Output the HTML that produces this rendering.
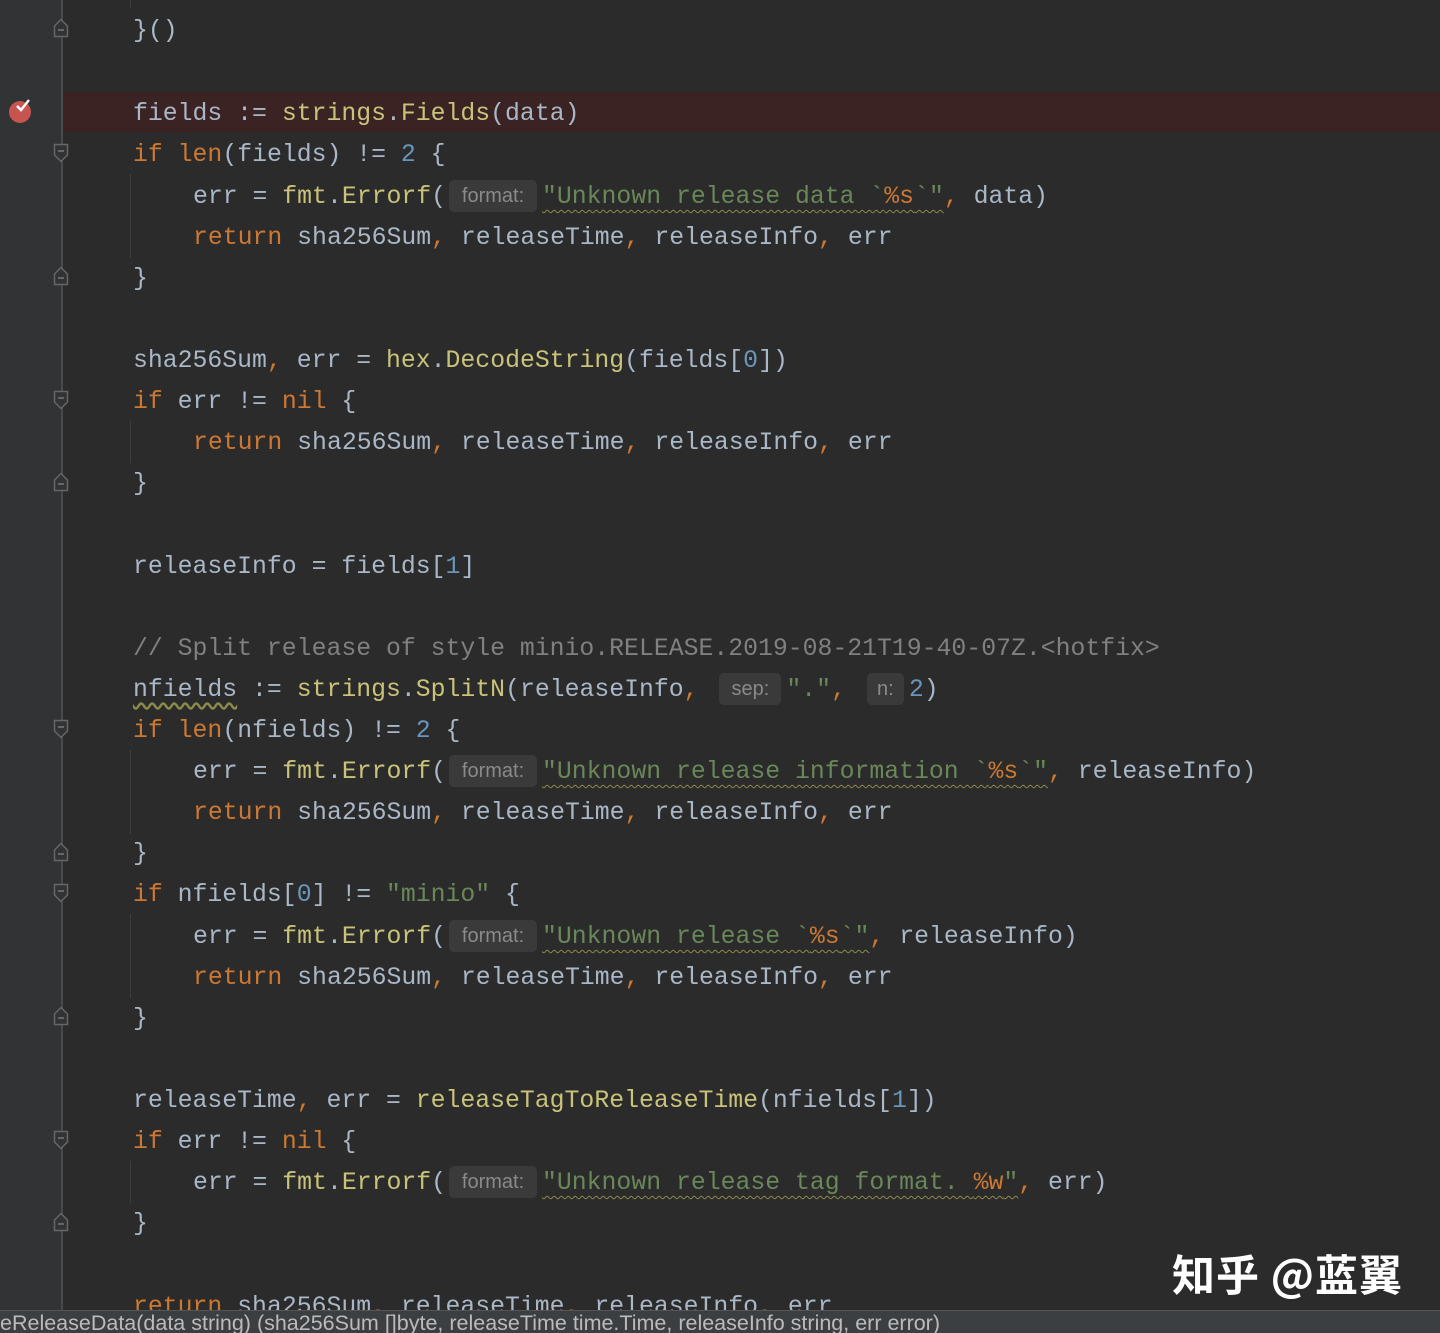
<!DOCTYPE html>
<html><head><meta charset="utf-8"><style>
html,body{margin:0;padding:0;}
body{width:1440px;height:1332px;background:#2b2b2b;position:relative;overflow:hidden;font-family:"Liberation Mono",monospace;font-size:24.8px;color:#a9b7c6;}
.gut{position:absolute;left:0;top:0;width:62px;height:1310px;background:#313335;}
.gl{position:absolute;left:61px;top:0;width:2px;height:1310px;background:#4a4a4a;}
.bp{position:absolute;left:62px;top:92px;width:1378px;height:40px;background:#3b2324;}
.l{position:absolute;height:41px;line-height:41px;white-space:pre;margin-top:3px;}
.k{color:#cc7832}.f{color:#c9c37a}.n{color:#6897bb}.s{color:#6a8759}.c{color:#808080}.p{color:#cc7832}
.w{text-decoration:underline wavy #8a8a4a;text-decoration-thickness:1px;text-underline-offset:6px;}
.h{display:inline-block;height:32px;line-height:32px;background:#3a3a3a;color:#8a8a8a;font-family:"Liberation Sans",sans-serif;font-size:20px;text-align:center;border-radius:5px;vertical-align:1px;margin:0 5px 0 3px;}
.ig{position:absolute;left:130px;width:1px;background:#3e3e3e;}
.fo{position:absolute;left:53px;width:16px;height:20px;}
.st{position:absolute;left:0;top:1310px;width:1440px;height:22px;background:#3c3f41;border-top:1px solid #555;color:#bbb;font-family:"Liberation Sans",sans-serif;font-size:21.5px;line-height:25px;white-space:pre;overflow:hidden;}
.wm{position:absolute;left:1172px;top:1242px;color:#fff;font-family:"Noto Sans CJK SC",sans-serif;font-size:43px;font-weight:bold;letter-spacing:1px;white-space:pre;}
</style></head><body>
<div class="gut"></div>
<div class="bp"></div>
<div class="gl"></div>
<svg style="position:absolute;left:6px;top:96px" width="32" height="32"><circle cx="14" cy="16" r="11" fill="#c75450"/><path d="M11 10 l4 4 l8 -10" stroke="#fff" stroke-width="2.5" fill="none"/></svg>

<svg class="fo" style="top:18px"><path d="M1.5 18.5 V8 L8 1.5 L14.5 8 V18.5 Z" fill="#313335" stroke="#666" stroke-width="1.5"/><path d="M5 12 H11" stroke="#777" stroke-width="1.5"/></svg>
<svg class="fo" style="top:143px"><path d="M1.5 1.5 H14.5 V12 L8 18.5 L1.5 12 Z" fill="#313335" stroke="#666" stroke-width="1.5"/><path d="M5 8 H11" stroke="#777" stroke-width="1.5"/></svg>
<svg class="fo" style="top:266px"><path d="M1.5 18.5 V8 L8 1.5 L14.5 8 V18.5 Z" fill="#313335" stroke="#666" stroke-width="1.5"/><path d="M5 12 H11" stroke="#777" stroke-width="1.5"/></svg>
<svg class="fo" style="top:390px"><path d="M1.5 1.5 H14.5 V12 L8 18.5 L1.5 12 Z" fill="#313335" stroke="#666" stroke-width="1.5"/><path d="M5 8 H11" stroke="#777" stroke-width="1.5"/></svg>
<svg class="fo" style="top:472px"><path d="M1.5 18.5 V8 L8 1.5 L14.5 8 V18.5 Z" fill="#313335" stroke="#666" stroke-width="1.5"/><path d="M5 12 H11" stroke="#777" stroke-width="1.5"/></svg>
<svg class="fo" style="top:719px"><path d="M1.5 1.5 H14.5 V12 L8 18.5 L1.5 12 Z" fill="#313335" stroke="#666" stroke-width="1.5"/><path d="M5 8 H11" stroke="#777" stroke-width="1.5"/></svg>
<svg class="fo" style="top:842px"><path d="M1.5 18.5 V8 L8 1.5 L14.5 8 V18.5 Z" fill="#313335" stroke="#666" stroke-width="1.5"/><path d="M5 12 H11" stroke="#777" stroke-width="1.5"/></svg>
<svg class="fo" style="top:883px"><path d="M1.5 1.5 H14.5 V12 L8 18.5 L1.5 12 Z" fill="#313335" stroke="#666" stroke-width="1.5"/><path d="M5 8 H11" stroke="#777" stroke-width="1.5"/></svg>
<svg class="fo" style="top:1006px"><path d="M1.5 18.5 V8 L8 1.5 L14.5 8 V18.5 Z" fill="#313335" stroke="#666" stroke-width="1.5"/><path d="M5 12 H11" stroke="#777" stroke-width="1.5"/></svg>
<svg class="fo" style="top:1130px"><path d="M1.5 1.5 H14.5 V12 L8 18.5 L1.5 12 Z" fill="#313335" stroke="#666" stroke-width="1.5"/><path d="M5 8 H11" stroke="#777" stroke-width="1.5"/></svg>
<svg class="fo" style="top:1212px"><path d="M1.5 18.5 V8 L8 1.5 L14.5 8 V18.5 Z" fill="#313335" stroke="#666" stroke-width="1.5"/><path d="M5 12 H11" stroke="#777" stroke-width="1.5"/></svg>

<div class="ig" style="top:0;height:8px"></div>
<div class="ig" style="top:174px;height:84px"></div>
<div class="ig" style="top:421px;height:42px"></div>
<div class="ig" style="top:750px;height:84px"></div>
<div class="ig" style="top:914px;height:84px"></div>
<div class="ig" style="top:1161px;height:42px"></div>

<div class="l" style="left:133px;top:8px">}()</div>
<div class="l" style="left:133px;top:91px">fields := <span class="f">strings</span>.<span class="f">Fields</span>(data)</div>
<div class="l" style="left:133px;top:132px"><span class="k">if</span> <span class="k">len</span>(fields) != <span class="n">2</span> {</div>
<div class="l" style="left:193px;top:174px">err = <span class="f">fmt</span>.<span class="f">Errorf</span>(<span class="h" style="width:88px">format:</span><span class="s w">"Unknown release data `<span class="p">%s</span>`"</span><span class="k">,</span> data)</div>
<div class="l" style="left:193px;top:215px"><span class="k">return</span> sha256Sum<span class="k">,</span> releaseTime<span class="k">,</span> releaseInfo<span class="k">,</span> err</div>
<div class="l" style="left:133px;top:256px">}</div>
<div class="l" style="left:133px;top:338px">sha256Sum<span class="k">,</span> err = <span class="f">hex</span>.<span class="f">DecodeString</span>(fields[<span class="n">0</span>])</div>
<div class="l" style="left:133px;top:379px"><span class="k">if</span> err != <span class="k">nil</span> {</div>
<div class="l" style="left:193px;top:420px"><span class="k">return</span> sha256Sum<span class="k">,</span> releaseTime<span class="k">,</span> releaseInfo<span class="k">,</span> err</div>
<div class="l" style="left:133px;top:461px">}</div>
<div class="l" style="left:133px;top:544px">releaseInfo = fields[<span class="n">1</span>]</div>
<div class="l c" style="left:133px;top:626px">// Split release of style minio.RELEASE.2019-08-21T19-40-07Z.&lt;hotfix&gt;</div>
<div class="l" style="left:133px;top:667px"><span style="text-decoration:underline wavy #8a8a4a;text-underline-offset:6px">nfields</span> := <span class="f">strings</span>.<span class="f">SplitN</span>(releaseInfo<span class="k">,</span> <span class="h" style="width:62px;margin-left:6px">sep:</span><span class="s">"."</span><span class="k">,</span> <span class="h" style="width:37px;margin-left:6px">n:</span><span class="n">2</span>)</div>
<div class="l" style="left:133px;top:708px"><span class="k">if</span> <span class="k">len</span>(nfields) != <span class="n">2</span> {</div>
<div class="l" style="left:193px;top:749px">err = <span class="f">fmt</span>.<span class="f">Errorf</span>(<span class="h" style="width:88px">format:</span><span class="s w">"Unknown release information `<span class="p">%s</span>`"</span><span class="k">,</span> releaseInfo)</div>
<div class="l" style="left:193px;top:790px"><span class="k">return</span> sha256Sum<span class="k">,</span> releaseTime<span class="k">,</span> releaseInfo<span class="k">,</span> err</div>
<div class="l" style="left:133px;top:831px">}</div>
<div class="l" style="left:133px;top:872px"><span class="k">if</span> nfields[<span class="n">0</span>] != <span class="s">"minio"</span> {</div>
<div class="l" style="left:193px;top:914px">err = <span class="f">fmt</span>.<span class="f">Errorf</span>(<span class="h" style="width:88px">format:</span><span class="s w">"Unknown release `<span class="p">%s</span>`"</span><span class="k">,</span> releaseInfo)</div>
<div class="l" style="left:193px;top:955px"><span class="k">return</span> sha256Sum<span class="k">,</span> releaseTime<span class="k">,</span> releaseInfo<span class="k">,</span> err</div>
<div class="l" style="left:133px;top:996px">}</div>
<div class="l" style="left:133px;top:1078px">releaseTime<span class="k">,</span> err = <span class="f">releaseTagToReleaseTime</span>(nfields[<span class="n">1</span>])</div>
<div class="l" style="left:133px;top:1119px"><span class="k">if</span> err != <span class="k">nil</span> {</div>
<div class="l" style="left:193px;top:1160px">err = <span class="f">fmt</span>.<span class="f">Errorf</span>(<span class="h" style="width:88px">format:</span><span class="s w">"Unknown release tag format. <span class="p">%w</span>"</span><span class="k">,</span> err)</div>
<div class="l" style="left:133px;top:1201px">}</div>
<div class="l" style="left:133px;top:1284px"><span class="k">return</span> sha256Sum<span class="k">,</span> releaseTime<span class="k">,</span> releaseInfo<span class="k">,</span> err</div>

<div class="wm">知乎 @蓝翼</div>
<div class="st">eReleaseData(data string) (sha256Sum []byte, releaseTime time.Time, releaseInfo string, err error)</div>
</body></html>
